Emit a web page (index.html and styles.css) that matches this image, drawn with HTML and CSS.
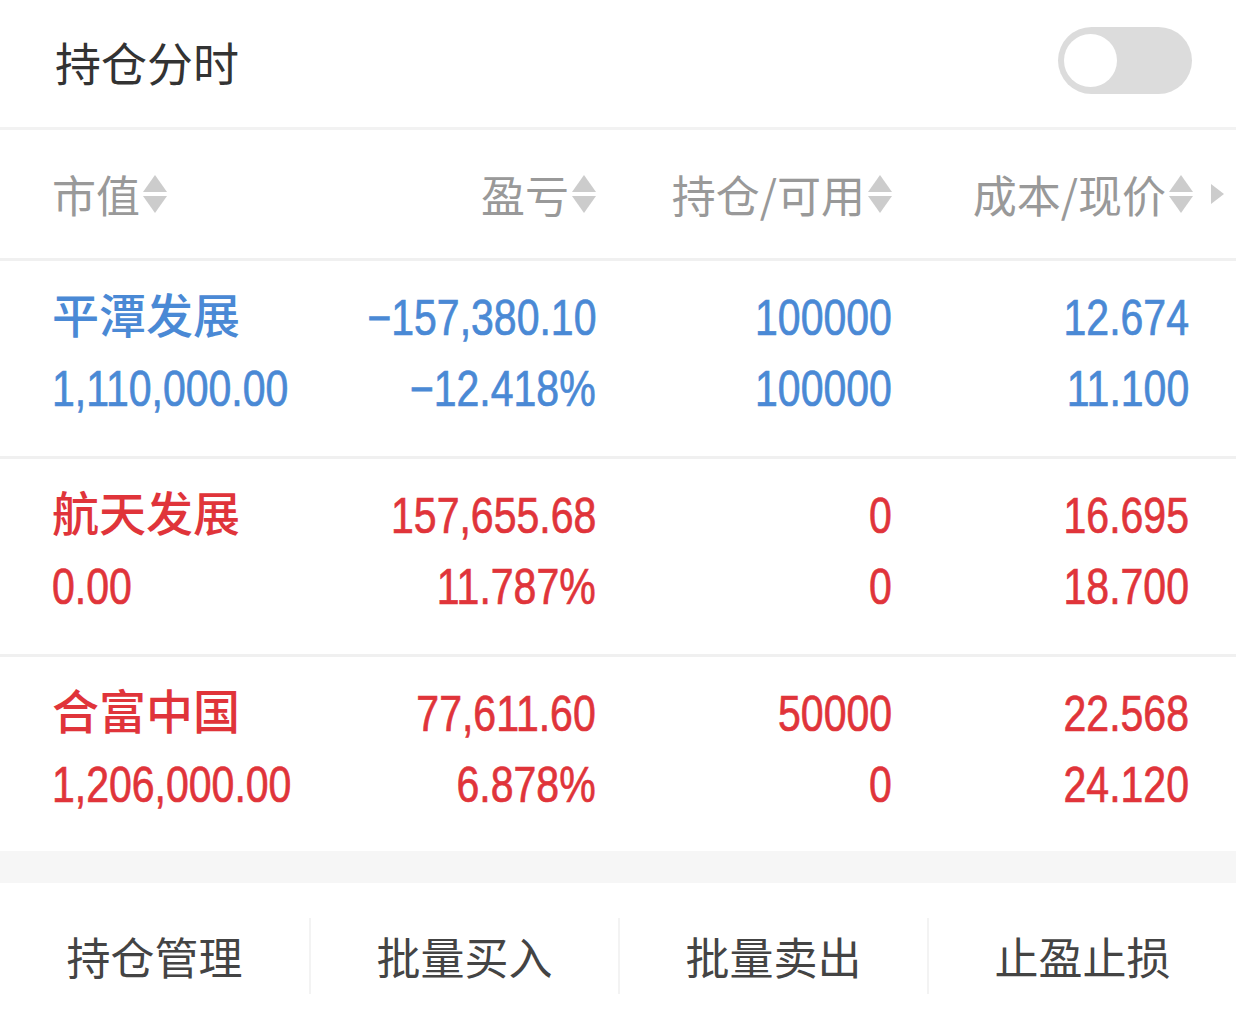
FILE: index.html
```html
<!DOCTYPE html>
<html lang="zh-CN">
<head>
<meta charset="utf-8">
<title>持仓分时</title>
<link rel="stylesheet" href="styles.css">
</head>
<body>
<div class="page">
  <div class="topbar">
    <div class="title">持仓分时</div>
    <div class="toggle"><div class="knob"></div></div>
  </div>

  <div class="thead">
    <div class="th th-left">市值<svg class="sort" viewBox="0 0 24 38"><path d="M12 0 L24 17 L0 17 Z"/><path d="M0 21 L24 21 L12 38 Z"/></svg></div>
    <div class="th">盈亏<svg class="sort" viewBox="0 0 24 38"><path d="M12 0 L24 17 L0 17 Z"/><path d="M0 21 L24 21 L12 38 Z"/></svg></div>
    <div class="th">持仓/可用<svg class="sort" viewBox="0 0 24 38"><path d="M12 0 L24 17 L0 17 Z"/><path d="M0 21 L24 21 L12 38 Z"/></svg></div>
    <div class="th th-last">成本/现价<svg class="sort" viewBox="0 0 24 38"><path d="M12 0 L24 17 L0 17 Z"/><path d="M0 21 L24 21 L12 38 Z"/></svg></div>
    <svg class="more" viewBox="0 0 13 20"><path d="M0 0 L13 10 L0 20 Z"/></svg>
  </div>

  <div class="row blue">
    <div class="cell left"><div class="name">平潭发展</div><div class="num"><span>1,110,000.00</span></div></div>
    <div class="cell"><div class="num"><span>−157,380.10</span></div><div class="num"><span>−12.418%</span></div></div>
    <div class="cell"><div class="num"><span>100000</span></div><div class="num"><span>100000</span></div></div>
    <div class="cell"><div class="num"><span>12.674</span></div><div class="num"><span>11.100</span></div></div>
  </div>

  <div class="row red">
    <div class="cell left"><div class="name">航天发展</div><div class="num"><span>0.00</span></div></div>
    <div class="cell"><div class="num"><span>157,655.68</span></div><div class="num"><span>11.787%</span></div></div>
    <div class="cell"><div class="num"><span>0</span></div><div class="num"><span>0</span></div></div>
    <div class="cell"><div class="num"><span>16.695</span></div><div class="num"><span>18.700</span></div></div>
  </div>

  <div class="row red last">
    <div class="cell left"><div class="name">合富中国</div><div class="num"><span>1,206,000.00</span></div></div>
    <div class="cell"><div class="num"><span>77,611.60</span></div><div class="num"><span>6.878%</span></div></div>
    <div class="cell"><div class="num"><span>50000</span></div><div class="num"><span>0</span></div></div>
    <div class="cell"><div class="num"><span>22.568</span></div><div class="num"><span>24.120</span></div></div>
  </div>

  <div class="band"></div>

  <div class="actions">
    <div class="action">持仓管理</div>
    <div class="action">批量买入</div>
    <div class="action">批量卖出</div>
    <div class="action">止盈止损</div>
  </div>
</div>
</body>
</html>
```

FILE: styles.css
```css
* { box-sizing: border-box; }
html, body { margin: 0; padding: 0; background: #ffffff; }
body {
  font-family: "Noto Sans CJK SC", "Noto Sans", sans-serif;
  width: 1236px;
  height: 1030px;
  overflow: hidden;
}
.page { width: 1236px; }

.topbar {
  height: 130px;
  border-bottom: 3px solid #f2f2f2;
  display: flex;
  align-items: center;
  justify-content: space-between;
  padding: 0 44px 6px 55px;
}
.title {
  font-size: 46px;
  color: #333333;
  line-height: 1;
}
.toggle {
  width: 134px;
  height: 67px;
  border-radius: 34px;
  background: #dcdcdc;
  display: flex;
  align-items: center;
  padding-left: 6px;
}
.knob {
  width: 53px;
  height: 53px;
  border-radius: 50%;
  background: #ffffff;
}

.thead {
  height: 131px;
  border-bottom: 3px solid #f0f0f0;
  display: grid;
  grid-template-columns: 288px 256px 296px 297px 1fr;
  align-items: center;
  padding-left: 52px;
}
.th {
  display: flex;
  align-items: center;
  justify-content: flex-end;
  font-size: 44px;
  color: #999999;
  line-height: 1;
  gap: 3px;
}
.th-left { justify-content: flex-start; }
.th-last { margin-right: -4px; }
.sort { width: 24px; height: 38px; fill: #cccccc; }
.more { width: 13px; height: 20px; fill: #cccccc; margin-left: 22px; }

.row {
  height: 198px;
  border-bottom: 3px solid #f0f0f0;
  display: grid;
  grid-template-columns: 288px 256px 296px 297px;
  padding: 21px 0 0 52px;
}
.row.last { border-bottom: none; height: 194px; }
.cell {
  display: flex;
  flex-direction: column;
  align-items: flex-end;
}
.cell.left { align-items: flex-start; }
.cell > div { height: 71px; display: flex; align-items: center; }
.blue { color: #4a89d5; }
.red { color: #e0343a; }
.name {
  font-size: 47px;
  font-weight: 500;
  line-height: 1;
  padding-bottom: 10px;
}
.num {
  font-family: "Liberation Sans", "Arial", sans-serif;
  font-size: 50px;
  line-height: 1;
}
.num span {
  display: inline-block;
  transform: scaleX(0.82);
  transform-origin: right center;
  -webkit-text-stroke: 0.7px currentColor;
}
.cell.left .num span { transform-origin: left center; }

.band { height: 32px; background: #f6f6f6; }

.actions {
  height: 146px;
  display: grid;
  grid-template-columns: repeat(4, 1fr);
  align-items: center;
}
.action {
  text-align: center;
  font-size: 44px;
  color: #444444;
  line-height: 76px;
  border-left: 2px solid #f3f3f3;
}
.action:first-child { border-left: none; }
```
